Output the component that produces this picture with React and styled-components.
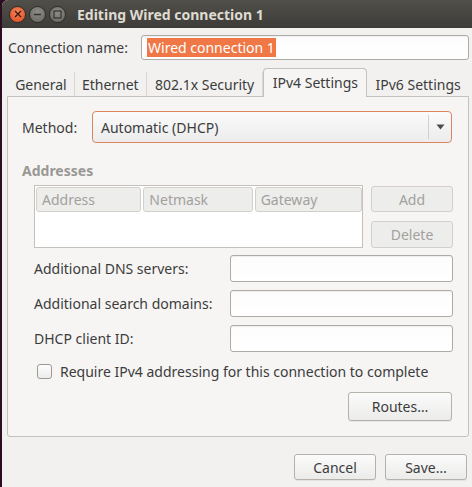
import React from "react";
import styled, { createGlobalStyle } from "styled-components";

const GlobalStyle = createGlobalStyle`
  html, body {
    margin: 0;
    padding: 0;
    background: #2c0d22;
  }
  * {
    box-sizing: border-box;
  }
`;

const FONT = `"Noto Sans", "Open Sans", "DejaVu Sans", sans-serif`;

export default function App() {
  return (
    <>
      <GlobalStyle />
      <StyledWindow>
        <TitleBar>
          <WindowButtons>
            <CircleButton $kind="close">
              <svg width="8" height="8" viewBox="0 0 8 8">
                <path d="M1 1 L7 7 M7 1 L1 7" stroke="#3a1a10" strokeWidth="1.4" />
              </svg>
            </CircleButton>
            <CircleButton>
              <svg width="9" height="9" viewBox="0 0 9 9">
                <path d="M1 4.5 H8" stroke="#35342f" strokeWidth="1.3" />
              </svg>
            </CircleButton>
            <CircleButton>
              <svg width="9" height="9" viewBox="0 0 9 9">
                <rect x="1" y="1" width="7" height="7" fill="none" stroke="#35342f" strokeWidth="1.2" />
              </svg>
            </CircleButton>
          </WindowButtons>
          <Title>Editing Wired connection 1</Title>
        </TitleBar>

        <Content>
          <NameRow>
            <Label>Connection name:</Label>
            <TextField $grow>
              <Selected>Wired connection 1</Selected>
            </TextField>
          </NameRow>

          <Tabs>
            <Tab $w={67}>General</Tab>
            <Tab $w={72}>Ethernet</Tab>
            <Tab $w={117}>802.1x Security</Tab>
            <Tab $w={104} $active>IPv4 Settings</Tab>
            <Tab $w={102} $last>IPv6 Settings</Tab>
          </Tabs>

          <Panel>
            <MethodRow>
              <Label>Method:</Label>
              <Combo>
                <span>Automatic (DHCP)</span>
                <ComboArrow>
                  <svg width="9" height="6" viewBox="0 0 9 6">
                    <path d="M0.5 0.5 H8.5 L4.5 5.5 Z" fill="#4c4c4c" />
                  </svg>
                </ComboArrow>
              </Combo>
            </MethodRow>

            <SectionTitle>Addresses</SectionTitle>

            <AddressArea>
              <Table>
                <HeaderRow>
                  <HeaderCell $w={106}>Address</HeaderCell>
                  <HeaderCell $w={110}>Netmask</HeaderCell>
                  <HeaderCell $w={108}>Gateway</HeaderCell>
                </HeaderRow>
              </Table>
              <SideButtons>
                <Button $disabled $w={82} $h={26}>Add</Button>
                <Button $disabled $w={82} $h={27}>Delete</Button>
              </SideButtons>
            </AddressArea>

            <FieldGrid>
              <Label>Additional DNS servers:</Label>
              <TextField />
              <Label>Additional search domains:</Label>
              <TextField />
              <Label>DHCP client ID:</Label>
              <TextField />
            </FieldGrid>

            <CheckRow>
              <CheckBox />
              <Label>Require IPv4 addressing for this connection to complete</Label>
            </CheckRow>

            <RoutesRow>
              <Button $w={104} $h={29}>Routes…</Button>
            </RoutesRow>
          </Panel>

          <ActionRow>
            <Button $w={82} $h={26}>Cancel</Button>
            <Button $w={82} $h={26}>Save…</Button>
          </ActionRow>
        </Content>
      </StyledWindow>
    </>
  );
}

const StyledWindow = styled.div`
  margin-left: 2px;
  width: 470px;
  height: 487px;
  background: #f2f1f0;
  border-top-left-radius: 6px;
  overflow: hidden;
  display: flex;
  flex-direction: column;
  font-family: ${FONT};
  font-size: 14px;
  color: #3c3c3c;
`;

const TitleBar = styled.div`
  height: 28px;
  flex: none;
  display: flex;
  align-items: center;
  padding-left: 7px;
  background: linear-gradient(#514f4a, #3d3c38);
`;

const WindowButtons = styled.div`
  display: flex;
  gap: 3px;
`;

const CircleButton = styled.div`
  width: 17px;
  height: 17px;
  border-radius: 50%;
  display: flex;
  align-items: center;
  justify-content: center;
  border: 1px solid #2e2d2a;
  background: ${(p) =>
    p.$kind === "close"
      ? "radial-gradient(circle at 50% 35%, #f5845a, #de4a1c)"
      : "radial-gradient(circle at 50% 35%, #8e8c86, #67655f)"};
`;

const Title = styled.div`
  margin-left: 11px;
  font-weight: bold;
  font-size: 14px;
  color: #dfdbd2;
`;

const Content = styled.div`
  flex: 1;
  display: flex;
  flex-direction: column;
  padding: 7px 3px 0 5px;
`;

const NameRow = styled.div`
  display: flex;
  align-items: center;
  height: 25px;
  padding-left: 1px;

  & > span:first-child {
    width: 133px;
    flex: none;
  }
`;

const Label = styled.span`
  white-space: nowrap;
  color: #3c3c3c;
`;

const TextField = styled.div`
  height: ${(p) => (p.$grow ? "25px" : "27px")};
  flex: 1;
  display: flex;
  align-items: center;
  padding: 0 5px;
  background: linear-gradient(#fcfcfc, #ffffff);
  border: 1px solid #aeaba6;
  border-radius: 3px;
  box-shadow: inset 0 1px 1px rgba(0, 0, 0, 0.06);
`;

const Selected = styled.span`
  background: #f07746;
  color: #ffffff;
  padding: 0 1px;
  line-height: 19px;
`;

const Tabs = styled.div`
  display: flex;
  margin-top: 8px;
  padding-left: 1px;
  height: 28px;
  align-items: flex-end;
  position: relative;
  z-index: 1;
`;

const Tab = styled.div`
  width: ${(p) => p.$w}px;
  height: 24px;
  display: flex;
  align-items: center;
  justify-content: center;
  border-right: ${(p) => (p.$active || p.$last ? "none" : "1px solid #dad7d3")};
  ${(p) =>
    p.$active &&
    `
    background: #f6f5f4;
    border: 1px solid #c4c1bc;
    border-bottom: none;
    border-radius: 4px 4px 0 0;
    margin-bottom: -1px;
    height: 29px;
    padding-bottom: 2px;
  `}
`;

const Panel = styled.div`
  background: #f6f5f4;
  border: 1px solid #c4c1bc;
  border-radius: 0 0 3px 3px;
  padding: 14px 16px 15px 14px;
  display: flex;
  flex-direction: column;
`;

const MethodRow = styled.div`
  display: flex;
  align-items: center;
  & > span:first-child {
    width: 70px;
    flex: none;
  }
`;

const Combo = styled.div`
  flex: 1;
  height: 32px;
  display: flex;
  align-items: center;
  justify-content: space-between;
  padding-left: 8px;
  background: linear-gradient(#fbfbfb, #ececec);
  border: 1px solid #dc855c;
  border-radius: 4px;
`;

const ComboArrow = styled.div`
  height: 24px;
  width: 23px;
  border-left: 1px solid #d4d1cd;
  display: flex;
  align-items: center;
  justify-content: center;
`;

const SectionTitle = styled.div`
  margin-top: 18px;
  font-weight: bold;
  color: #9a9894;
`;

const AddressArea = styled.div`
  margin-top: 5px;
  padding-left: 12px;
  display: flex;
  gap: 8px;
`;

const Table = styled.div`
  width: 329px;
  height: 63px;
  background: #ffffff;
  border: 1px solid #c4c1bc;
  padding: 1px 0 0 1px;
`;

const HeaderRow = styled.div`
  display: flex;
  gap: 2px;
`;

const HeaderCell = styled.div`
  width: ${(p) => p.$w}px;
  height: 25px;
  padding-left: 5px;
  display: flex;
  align-items: center;
  color: #a3a19d;
  background: #ededec;
  border: 1px solid #d3d0cc;
  border-radius: 3px;
`;

const SideButtons = styled.div`
  display: flex;
  flex-direction: column;
  gap: 9px;
  padding-top: 1px;
`;

const Button = styled.div`
  width: ${(p) => p.$w}px;
  height: ${(p) => p.$h}px;
  display: flex;
  align-items: center;
  justify-content: center;
  border-radius: 3px;
  color: ${(p) => (p.$disabled ? "#a3a19d" : "#3c3c3c")};
  border: 1px solid ${(p) => (p.$disabled ? "#d3d0cc" : "#b4b1ac")};
  background: ${(p) =>
    p.$disabled ? "#ededec" : "linear-gradient(#fbfbfb, #ebebea)"};
  box-shadow: ${(p) => (p.$disabled ? "none" : "0 1px 0 rgba(0,0,0,0.05)")};
`;

const FieldGrid = styled.div`
  margin-top: 7px;
  padding-left: 12px;
  display: grid;
  grid-template-columns: 196px 223px;
  row-gap: 8px;
  align-items: center;
`;

const CheckRow = styled.div`
  margin-top: 10px;
  padding-left: 15px;
  display: flex;
  align-items: center;
  gap: 8px;
`;

const CheckBox = styled.div`
  width: 15px;
  height: 15px;
  border: 1px solid #9c9995;
  border-radius: 3px;
  background: linear-gradient(#fdfdfd, #ececec);
`;

const RoutesRow = styled.div`
  margin-top: 11px;
  display: flex;
  justify-content: flex-end;
`;

const ActionRow = styled.div`
  margin-top: 17px;
  display: flex;
  justify-content: flex-end;
  gap: 9px;
  padding-right: 2px;
`;
